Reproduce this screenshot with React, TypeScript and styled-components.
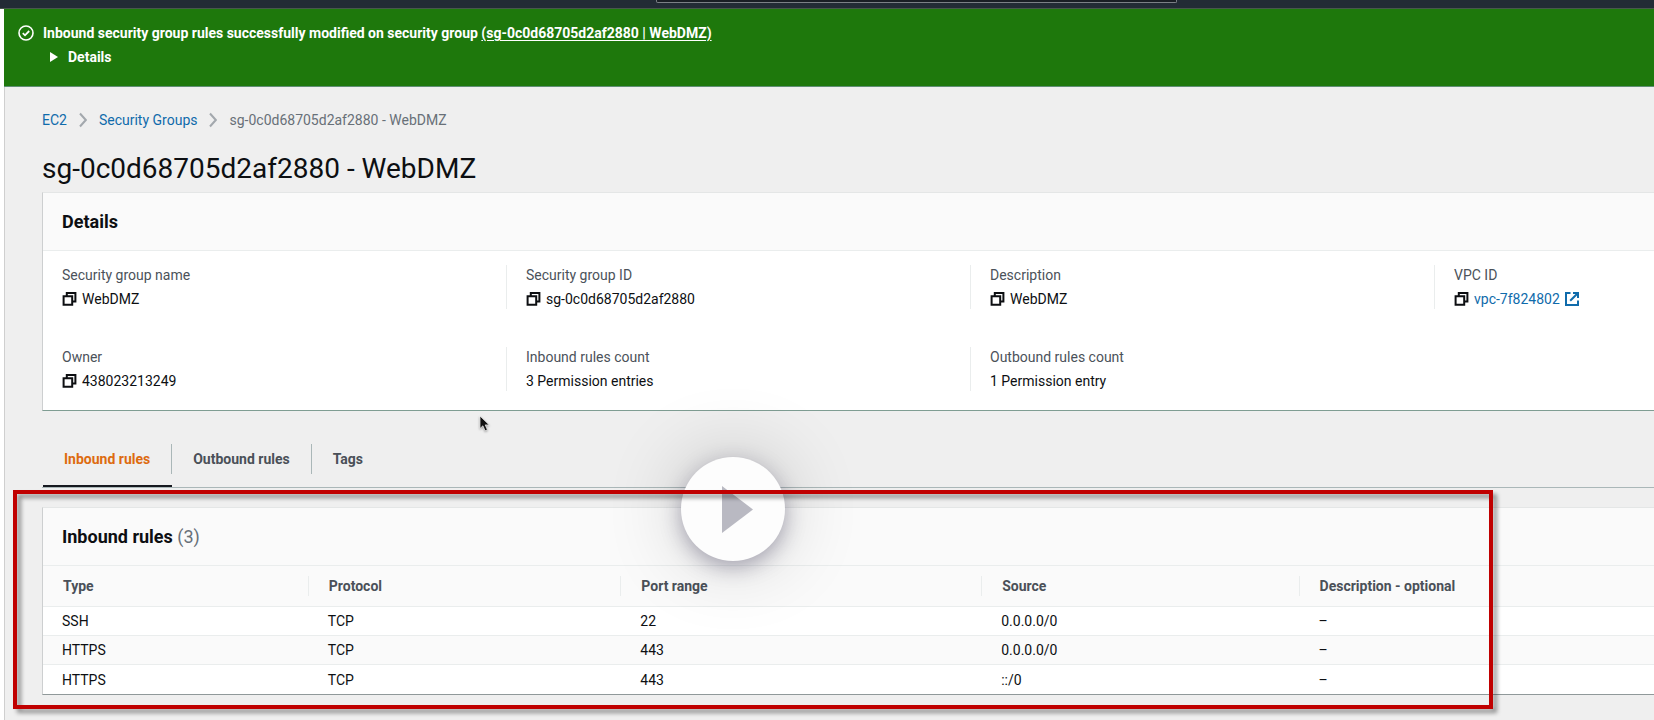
import React from 'react';
import styled, { createGlobalStyle, css } from 'styled-components';

const GlobalStyle = createGlobalStyle`
  *, *::before, *::after { box-sizing: border-box; }
  body {
    margin: 0;
    background: #efefef;
    color: #0d0f12;
    font-family: Roboto, "Noto Sans", sans-serif;
    font-size: 14px;
    line-height: 20px;
  }
  h1, h2, dl, dd, ol, ul { margin: 0; padding: 0; }
  ol, ul { list-style: none; }
  button { font: inherit; color: inherit; background: none; border: 0; padding: 0; cursor: pointer; }
`;

const Page = styled.div`
  position: relative;
  min-height: 100vh;
  display: flex;
  flex-direction: column;
  overflow: hidden;
`;

const TopBar = styled.header`
  height: 9px;
  display: flex;
  justify-content: center;
  padding-left: 179px;
  background: #222b35;
  border-bottom: 1px solid #47584c;
`;

const SearchEdge = styled.div`
  width: 521px;
  height: 3px;
  background: #191e24;
  border: 1px solid #7b8086;
  border-top: 0;
  border-radius: 0 0 2px 2px;
`;

const Body = styled.div`
  flex: 1;
  display: flex;
  flex-direction: column;
  border-left: 4px solid #ffffff;
`;

const Banner = styled.section`
  display: flex;
  gap: 9px;
  height: 78px;
  padding: 14px 14px 0;
  background: #1e780c;
  border-bottom: 1px solid #5f8f74;
  color: #ffffff;
  font-weight: 700;
`;

const BannerIcon = styled.svg`
  flex: none;
  width: 16px;
  height: 16px;
  margin-top: 2px;
`;

const BannerText = styled.div`
  display: flex;
  flex-direction: column;
  align-items: flex-start;
  gap: 4px;
`;

const BannerLink = styled.a`
  color: inherit;
  text-underline-offset: 2px;
`;

const Expander = styled.button`
  display: flex;
  align-items: center;
  gap: 10px;
  padding-left: 7px;
  font-weight: 700;
`;

const Main = styled.main`
  flex: 1;
  padding: 23px 0 25px 37px;
  border-left: 1px solid #cfcfcf;
`;

const Crumbs = styled.ol`
  display: flex;
  align-items: center;
  color: #687078;
`;

const Crumb = styled.li`
  display: flex;
  align-items: center;
`;

const ChevronIcon = styled.svg`
  width: 8px;
  height: 16px;
  margin: 0 12px;
`;

const Link = styled.a`
  display: inline-flex;
  align-items: center;
  gap: 4px;
  color: #0f6bab;
  text-decoration: none;
`;

const Title = styled.h1`
  margin: 21px 0 5px;
  font-size: 28px;
  line-height: 36px;
  font-weight: 400;
`;

const Card = styled.section<{ $edge: string }>`
  background: #ffffff;
  border: 1px solid #e4e6e6;
  border-right: 0;
  border-left-color: #cdcfd0;
  border-bottom-color: ${(p) => p.$edge};
`;

const CardHeader = styled.div`
  height: 58px;
  display: flex;
  align-items: center;
  padding: 0 20px 0 19px;
  background: #fafafa;
  border-bottom: 1px solid #eaeded;
`;

const CardTitle = styled.h2`
  font-size: 18px;
  line-height: 22px;
  font-weight: 700;
`;

const Count = styled.span`
  font-weight: 400;
  color: #687078;
`;

const Facts = styled.dl`
  display: grid;
  grid-template-columns: repeat(3, 464fr) 219fr;
  row-gap: 38px;
  padding: 14px 0 19px;
`;

const Fact = styled.div<{ $divided: boolean }>`
  display: flex;
  flex-direction: column;
  gap: 4px;
  padding-left: 19px;
  border-left: 1px solid ${(p) => (p.$divided ? '#eaeded' : 'transparent')};
  margin-left: -1px;
`;

const FactLabel = styled.dt`
  color: #4b525a;
`;

const FactValue = styled.dd`
  display: flex;
  align-items: center;
  gap: 4px;
`;

const CopyButton = styled.button`
  display: flex;
`;

const SmallIcon = styled.svg`
  display: block;
  width: 16px;
  height: 16px;
`;

const Tabs = styled.div`
  display: flex;
  margin: 33px 0 19px;
  padding-left: 1px;
  border-bottom: 1px solid #aab7b8;
`;

const Tab = styled.button<{ $active?: boolean }>`
  padding-bottom: 11px;
  border-bottom: 2px solid transparent;
  font-weight: 700;
  color: #4a5058;
  ${(p) =>
    p.$active &&
    css`
      color: #dd6b10;
      border-bottom-color: #16191f;
    `}
`;

const TabLabel = styled.span`
  display: block;
  padding: 0 21px;
  line-height: 30px;
  border-right: 1px solid #aab7b8;
  ${Tab}:last-child & { border-right: 0; }
`;

const RulesArea = styled.div`
  position: relative;
`;

const Table = styled.table`
  width: 100%;
  table-layout: fixed;
  border-collapse: separate;
  border-spacing: 0;
  text-align: left;
`;

const HeadCell = styled.th<{ $width?: string }>`
  width: ${(p) => p.$width ?? 'auto'};
  height: 41px;
  padding: 0;
  background: #fafafa;
  border-bottom: 1px solid #eaeded;
  font-weight: 700;
  color: #4a5058;
`;

const HeadLabel = styled.div`
  padding-left: 20px;
  border-right: 1px solid #eaeded;
  ${HeadCell}:last-child & { border-right: 0; }
`;

const Row = styled.tr`
  &:nth-child(even) { background: #fafafa; }
`;

const Cell = styled.td`
  height: 29px;
  padding: 0 0 0 19px;
  border-bottom: 1px solid #eaeded;
  ${Row}:last-child & { border-bottom: 0; }
`;

const Highlight = styled.div`
  position: absolute;
  top: -17px;
  bottom: -14px;
  left: -29px;
  right: 161px;
  border: 4px solid #c00000;
  filter: drop-shadow(4px 4px 2px rgba(0, 0, 0, 0.4));
  pointer-events: none;
`;

const PlayButton = styled.button`
  position: absolute;
  top: -50px;
  left: 639px;
  width: 104px;
  height: 104px;
  border-radius: 50%;
  background: #fdfdfd;
  box-shadow: 0 6px 20px rgba(50, 45, 80, 0.36), 0 0 80px rgba(0, 0, 0, 0.2);
`;

const PlayIcon = styled.svg`
  display: block;
  width: 104px;
  height: 104px;
`;

const Pointer = styled.svg`
  position: absolute;
  top: 415px;
  left: 479px;
  width: 12px;
  height: 18px;
  filter: drop-shadow(0 1px 1px rgba(0, 0, 0, 0.35));
`;

const Chevron = () => (
  <ChevronIcon viewBox="0 0 8 16" fill="none" stroke="#a3a8ad" strokeWidth="2" aria-hidden="true">
    <path d="M1 1.5 6.8 8 1 14.5" />
  </ChevronIcon>
);

const Copy = ({ label }: { label: string }) => (
  <CopyButton type="button" aria-label={`Copy ${label}`}>
    <SmallIcon viewBox="0 0 16 16" fill="none" stroke="currentColor" strokeWidth="2">
      <path d="M1.6 5.2h8.6v8.500H1.600z" />
      <path d="M4.800 5V2h8.600v8.500h-3" />
    </SmallIcon>
  </CopyButton>
);

const ExternalIcon = () => (
  <SmallIcon viewBox="0 0 16 16" fill="none" stroke="currentColor" strokeWidth="2" aria-hidden="true">
    <path d="M6.500 2H2v12h12V9.500" />
    <path d="M9 2h5v5" />
    <path d="M14 2 6.200 9.800" />
  </SmallIcon>
);

type FactData = { label: string; value: string; copy?: boolean; href?: string };

const facts: FactData[] = [
  { label: 'Security group name', value: 'WebDMZ', copy: true },
  { label: 'Security group ID', value: 'sg-0c0d68705d2af2880', copy: true },
  { label: 'Description', value: 'WebDMZ', copy: true },
  { label: 'VPC ID', value: 'vpc-7f824802', copy: true, href: '#vpc' },
  { label: 'Owner', value: '438023213249', copy: true },
  { label: 'Inbound rules count', value: '3 Permission entries' },
  { label: 'Outbound rules count', value: '1 Permission entry' },
];

const columns = [
  { name: 'Type', width: '16.5%' },
  { name: 'Protocol', width: '19.4%' },
  { name: 'Port range', width: '22.4%' },
  { name: 'Source', width: '19.7%' },
  { name: 'Description - optional' },
];

const rules = [
  ['SSH', 'TCP', '22', '0.0.0.0/0', '–'],
  ['HTTPS', 'TCP', '443', '0.0.0.0/0', '–'],
  ['HTTPS', 'TCP', '443', '::/0', '–'],
];

export default function App() {
  return (
    <Page>
      <GlobalStyle />
      <TopBar>
        <SearchEdge />
      </TopBar>
      <Body>
        <Banner role="status">
          <BannerIcon viewBox="0 0 16 16" fill="none" stroke="#ffffff" aria-hidden="true">
            <circle cx="8" cy="8" r="7" strokeWidth="1.6" />
            <path d="M4.8 8.2 7 10.3 11.2 6" strokeWidth="1.8" />
          </BannerIcon>
          <BannerText>
            <div>
              Inbound security group rules successfully modified on security group{' '}
              <BannerLink href="#group">(sg-0c0d68705d2af2880 | WebDMZ)</BannerLink>
            </div>
            <Expander type="button" aria-expanded="false">
              <svg width="8" height="10" viewBox="0 0 8 10" fill="#ffffff" aria-hidden="true">
                <path d="M0 0 8 5 0 10z" />
              </svg>
              Details
            </Expander>
          </BannerText>
        </Banner>

        <Main>
          <nav aria-label="Breadcrumb">
            <Crumbs>
              <Crumb>
                <Link href="#ec2">EC2</Link>
                <Chevron />
              </Crumb>
              <Crumb>
                <Link href="#groups">Security Groups</Link>
                <Chevron />
              </Crumb>
              <Crumb aria-current="page">sg-0c0d68705d2af2880 - WebDMZ</Crumb>
            </Crumbs>
          </nav>

          <Title>sg-0c0d68705d2af2880 - WebDMZ</Title>

          <Card $edge="#7f9d93">
            <CardHeader>
              <CardTitle>Details</CardTitle>
            </CardHeader>
            <Facts>
              {facts.map((fact, i) => (
                <Fact key={fact.label} $divided={i % 4 !== 0}>
                  <FactLabel>{fact.label}</FactLabel>
                  <FactValue>
                    {fact.copy && <Copy label={fact.label} />}
                    {fact.href ? (
                      <Link href={fact.href}>
                        {fact.value}
                        <ExternalIcon />
                      </Link>
                    ) : (
                      fact.value
                    )}
                  </FactValue>
                </Fact>
              ))}
            </Facts>
          </Card>

          <Tabs role="tablist">
            <Tab type="button" role="tab" aria-selected="true" $active>
              <TabLabel>Inbound rules</TabLabel>
            </Tab>
            <Tab type="button" role="tab" aria-selected="false">
              <TabLabel>Outbound rules</TabLabel>
            </Tab>
            <Tab type="button" role="tab" aria-selected="false">
              <TabLabel>Tags</TabLabel>
            </Tab>
          </Tabs>

          <RulesArea>
            <Card $edge="#90999a">
              <CardHeader>
                <CardTitle>
                  Inbound rules <Count>(3)</Count>
                </CardTitle>
              </CardHeader>
              <Table>
                <thead>
                  <tr>
                    {columns.map((column) => (
                      <HeadCell key={column.name} scope="col" $width={column.width}>
                        <HeadLabel>{column.name}</HeadLabel>
                      </HeadCell>
                    ))}
                  </tr>
                </thead>
                <tbody>
                  {rules.map((rule, r) => (
                    <Row key={r}>
                      {rule.map((text, c) => (
                        <Cell key={c}>{text}</Cell>
                      ))}
                    </Row>
                  ))}
                </tbody>
              </Table>
            </Card>
            <PlayButton type="button" aria-label="Play video">
              <PlayIcon viewBox="0 0 104 104" aria-hidden="true">
                <path d="M41 29 72 52.500 41 76z" fill="#b9b9c2" />
              </PlayIcon>
            </PlayButton>
            <Highlight />
          </RulesArea>
        </Main>
      </Body>
      <Pointer viewBox="0 0 12 18" aria-hidden="true">
        <path
          d="M1 1v12.500l2.900-2.700 2.200 5 2.300-1-2.200-4.900h4z"
          fill="#111111"
          stroke="#f4f4f4"
          strokeWidth="0.700"
        />
      </Pointer>
    </Page>
  );
}
